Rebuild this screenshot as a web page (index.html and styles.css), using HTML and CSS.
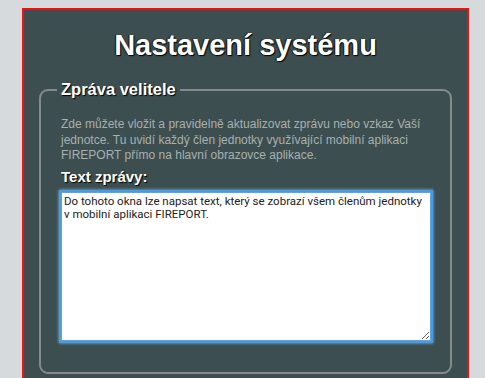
FILE: index.html
```html
<!DOCTYPE html>
<html>
<head>
  <meta charset="utf-8">
  <title>Nastavení systému</title>
  <link rel="stylesheet" href="styles.css">
</head>
<body>
  <div class="panel">
    <h1 class="title">Nastavení systému</h1>
    <fieldset class="box">
      <legend>Zpráva velitele</legend>
      <p class="info">Zde můžete vložit a pravidelně aktualizovat zprávu nebo vzkaz Vaší jednotce. Tu uvidí každý člen jednotky využívající mobilní aplikaci FIREPORT přímo na hlavní obrazovce aplikace.</p>
      <label class="lbl" for="msg">Text zprávy:</label>
      <textarea id="msg" class="msg">Do tohoto okna lze napsat text, který se zobrazí všem členům jednotky v mobilní aplikaci FIREPORT.</textarea>
    </fieldset>
  </div>
</body>
</html>
```

FILE: styles.css
```css
html, body {
  margin: 0;
  padding: 0;
  height: 100%;
  background-color: #d7dadc;
  overflow: hidden;
}
body {
  font-family: "Liberation Sans", Arial, sans-serif;
}
.panel {
  margin: 8px 16px 0 22px;
  height: 100%;
  border: 2px solid #f01010;
  border-bottom: none;
  background-color: #3c4e4f;
  box-sizing: border-box;
  padding: 18px 15px 0 15px;
}
.title {
  margin: 0 0 18px 0;
  text-align: center;
  color: #fff;
  font-size: 29px;
  line-height: 34px;
  font-weight: bold;
  text-shadow: 1px 1px 1px #000, -1px 0 1px #111;
}
.box {
  margin: 0;
  border: 2px solid #868a8a;
  border-radius: 9px;
  padding: 18px 19px 26px 20px;
  height: 294px;
  box-sizing: border-box;
}
.box legend {
  padding: 0 4px;
  margin-left: -4px;
  color: #fff;
  font-size: 16.5px;
  font-weight: bold;
  text-shadow: 1px 1px 1px #000;
}
.info {
  margin: 0 0 4px 0;
  color: #a8b0b0;
  font-size: 12px;
  line-height: 15.5px;
}
.lbl {
  display: block;
  color: #fff;
  font-size: 15px;
  font-weight: bold;
  text-shadow: 1px 1px 1px #000;
  margin-bottom: 7px;
}
.msg {
  display: block;
  width: 100%;
  height: 149px;
  box-sizing: border-box;
  border: 1px solid #5aa4e6;
  outline: 2px solid #4a9be0;
  outline-offset: 0;
  box-shadow: 0 0 3px 2px #7cc0f5;
  padding: 2px 2px;
  font-family: Roboto, "Noto Sans", sans-serif;
  font-size: 11.5px;
  line-height: 13px;
  color: #222;
  resize: vertical;
}
```
